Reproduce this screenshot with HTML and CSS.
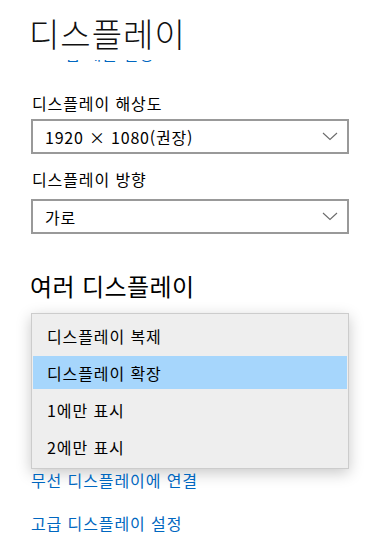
FILE: index.html
```html
<!DOCTYPE html>
<html lang="ko">
<head>
<meta charset="utf-8">
<link rel="stylesheet" href="styles.css">
</head>
<body>
<div class="page">
  <h1 class="title">디스플레이</h1>
  <div class="peek"><span class="peek-text">고급 배율 설정</span></div>

  <div class="label">디스플레이 해상도</div>
  <div class="select">
    <span class="select-text">1920 × 1080(권장)</span>
    <svg class="chev" width="16" height="9" viewBox="0 0 16 9"><path d="M1 1 L8 7.5 L15 1" fill="none" stroke="#6b6b6b" stroke-width="1.1"/></svg>
  </div>

  <div class="label label-2">디스플레이 방향</div>
  <div class="select select-2">
    <span class="select-text">가로</span>
    <svg class="chev" width="16" height="9" viewBox="0 0 16 9"><path d="M1 1 L8 7.5 L15 1" fill="none" stroke="#6b6b6b" stroke-width="1.1"/></svg>
  </div>

  <h2 class="heading">여러 디스플레이</h2>

  <div class="menu">
    <div class="item">디스플레이 복제</div>
    <div class="item selected">디스플레이 확장</div>
    <div class="item">1에만 표시</div>
    <div class="item">2에만 표시</div>
  </div>

  <a class="link link-1" href="#">무선 디스플레이에 연결</a>
  <a class="link link-2" href="#">고급 디스플레이 설정</a>
</div>
</body>
</html>
```
FILE: styles.css
```css
html, body {
  margin: 0;
  padding: 0;
  background: #ffffff;
}
body {
  font-family: "Noto Sans CJK KR", "Noto Sans", sans-serif;
  color: #000000;
  width: 372px;
  height: 558px;
  overflow: hidden;
}
.page {
  display: flex;
  flex-direction: column;
  padding-left: 31px;
  width: 318px;
}
.title {
  margin: 13px 0 0 -2px;
  font-size: 33px;
  font-weight: 300;
  line-height: 40px;
  letter-spacing: 1px;
  color: #111;
}
.peek {
  margin-top: 7px;
  margin-left: 19px;
  height: 3px;
  overflow: hidden;
}
.peek-text {
  display: block;
  margin-top: -17px;
  font-size: 16px;
  line-height: 20px;
  letter-spacing: 0.9px;
  color: #0067c0;
}
.label {
  margin-top: 30px;
  font-size: 16px;
  line-height: 20px;
  letter-spacing: 0.9px;
  padding-left: 1px;
}
.label-2 {
  margin-top: 15px;
}
.select {
  margin-top: 6px;
  height: 31px;
  border: 2px solid #999999;
  display: flex;
  align-items: center;
  justify-content: space-between;
  padding: 0 9px 0 12px;
}
.select-2 {
  margin-top: 10px;
}
.select-text {
  font-size: 16px;
  line-height: 20px;
  letter-spacing: 0.8px;
}
.chev {
  display: block;
}
.heading {
  margin: 37px 0 0 -1px;
  font-size: 24px;
  font-weight: 400;
  line-height: 30px;
  letter-spacing: 0.4px;
}
.menu {
  margin-top: 12px;
  border: 1px solid #cccccc;
  background: #eeeeee;
  padding: 3px 1px;
  display: flex;
  flex-direction: column;
  box-shadow: 0 4px 14px rgba(0, 0, 0, 0.22);
}
.item {
  height: 33px;
  margin: 2px 0;
  display: flex;
  align-items: center;
  padding-left: 14px;
  font-size: 16px;
  line-height: 20px;
  letter-spacing: 0.9px;
}
.item.selected {
  background: #a6d6fc;
}
.link {
  display: block;
  font-size: 16px;
  line-height: 20px;
  letter-spacing: 0.9px;
  color: #0067c0;
  text-decoration: none;
}
.link-1 {
  margin-top: 1px;
}
.link-2 {
  margin-top: 23px;
}
```
